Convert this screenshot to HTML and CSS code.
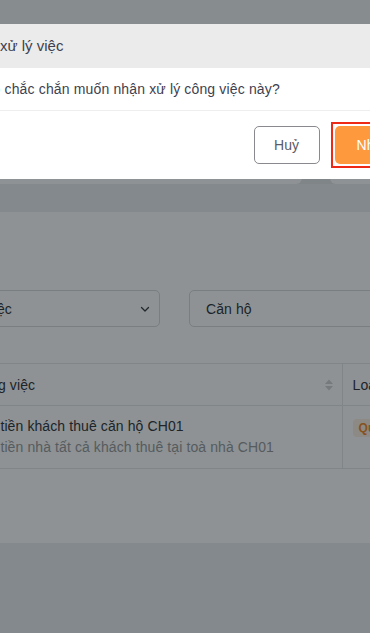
FILE: index.html
```html
<!DOCTYPE html>
<html lang="vi">
<head>
    <meta charset="UTF-8">
    <meta name="viewport" content="width=device-width, initial-scale=1.0">
    <title>Công việc</title>
    <link rel="stylesheet" href="styles.css">
</head>
<body>

    <!-- Page behind the dialog -->
    <div class="page">
        <div class="top-bar"></div>
        <div class="summary">
            <div class="summary-card"></div>
            <div class="summary-card"></div>
        </div>

        <div class="panel">
            <div class="filters">
                <div class="select-box">
                    <span>Loại công việc</span>
                    <svg class="chevron" width="12" height="12" viewBox="0 0 12 12"><path d="M2.5 4.5 6 8l3.5-3.5" fill="none" stroke="#3a3f46" stroke-width="1.3" stroke-linecap="round" stroke-linejoin="round"/></svg>
                </div>
                <div class="input-box">Căn hộ</div>
            </div>

            <table class="task-table">
                <colgroup>
                    <col class="w-no">
                    <col class="w-task">
                    <col class="w-type">
                </colgroup>
                <thead>
                    <tr>
                        <th class="col-no">STT</th>
                        <th class="col-task">
                            <div class="th-inner">
                                <span>Công việc</span>
                                <svg class="sort" width="10" height="12" viewBox="0 0 10 12"><path d="M5 0.5 9 5H1z" fill="#d3d3d3"/><path d="M5 11.5 1 7h8z" fill="#d3d3d3"/></svg>
                            </div>
                        </th>
                        <th class="col-type">Loại</th>
                    </tr>
                </thead>
                <tbody>
                    <tr>
                        <td class="col-no">1</td>
                        <td class="col-task">
                            <div class="task-title">Thu tiền khách thuê căn hộ CH01</div>
                            <div class="task-desc">Thu tiền nhà tất cả khách thuê tại toà nhà CH01</div>
                        </td>
                        <td class="col-type"><span class="tag">Quản lý</span></td>
                    </tr>
                </tbody>
            </table>
        </div>
    </div>

    <!-- Confirm dialog -->
    <div class="overlay"></div>
    <div class="modal">
        <div class="modal-header">Nhận xử lý việc</div>
        <div class="modal-body">Bạn có chắc chắn muốn nhận xử lý công việc này?</div>
        <div class="modal-footer">
            <button class="btn-cancel">Huỷ</button>
            <span class="focus-ring"><button class="btn-ok">Nhận</button></span>
        </div>
    </div>

</body>
</html>
```

FILE: styles.css
```css
body {
    font-family: "Liberation Sans", Arial, sans-serif;
    margin: 0;
    padding: 0;
    overflow: hidden;
    background-color: #eceef0;
    color: #333;
}

/* Page under the overlay */
.page {
    margin-left: -118px;
    width: 640px;
}

.top-bar {
    height: 24px;
    background-color: #f3f4f5;
}

.summary {
    height: 160px;
    background-color: #e5e7e8;
    display: flex;
    align-items: flex-end;
    gap: 28px;
    padding-left: 16px;
}

.summary-card {
    width: 404px;
    height: 120px;
    background-color: #fff;
    border-radius: 6px;
}

.summary-card + .summary-card {
    width: 180px;
}

.panel {
    margin-top: 28px;
    background-color: #fff;
    padding: 78px 16px 74px 16px;
}

.filters {
    display: flex;
    gap: 29px;
}

.select-box, .input-box {
    height: 37px;
    box-sizing: border-box;
    border: 1px solid #d9dadb;
    border-radius: 5px;
    font-size: 14px;
    letter-spacing: 0.1px;
    color: #33373d;
    display: flex;
    align-items: center;
    padding: 0 16px;
}

.select-box {
    width: 262px;
    justify-content: space-between;
    padding-left: 22px;
    padding-right: 8px;
}

.input-box {
    width: 300px;
}

.task-table {
    margin-top: 36px;
    border-collapse: collapse;
    table-layout: fixed;
    width: 600px;
    font-size: 14px;
    letter-spacing: 0.1px;
}

.w-no {
    width: 58px;
}

.w-task {
    width: 386px;
}

.task-table th {
    text-align: left;
    font-weight: normal;
    color: #33373d;
    height: 41px;
    padding: 0;
    border-top: 1px solid #e6e7e8;
    border-bottom: 1px solid #e6e7e8;
}

.task-table td {
    vertical-align: top;
    padding: 0;
    height: 62px;
    border-bottom: 1px solid #e6e7e8;
}

.col-no {
    padding-left: 10px !important;
}

.col-task {
    padding-left: 16px !important;
    padding-right: 8px !important;
    border-right: 1px solid #e6e7e8;
}

.th-inner {
    display: flex;
    justify-content: space-between;
    align-items: center;
}

.col-type {
    padding-left: 10px !important;
}

.task-title {
    margin-top: 12px;
    color: #33373d;
}

.task-desc {
    margin-top: 5px;
    color: #9a9ca0;
}

.tag {
    display: inline-block;
    margin-top: 13px;
    padding: 2px 6px;
    font-size: 12px;
    line-height: 14px;
    font-weight: bold;
    color: #f38a2a;
    background-color: #fdf0e3;
    border-radius: 4px;
}

/* Dim layer */
.overlay {
    position: fixed;
    inset: 0;
    background-color: rgba(4, 13, 17, 0.45);
}

/* Dialog */
.modal {
    position: absolute;
    top: 24px;
    left: -64px;
    width: 497px;
    background-color: #fff;
}

.modal-header {
    height: 44px;
    line-height: 44px;
    padding: 0 24px;
    background-color: #ebebeb;
    font-size: 15px;
    color: #3e3f4f;
}

.modal-body {
    height: 42px;
    line-height: 42px;
    padding: 0 20px;
    font-size: 14px;
    letter-spacing: 0.15px;
    color: #3e3f4f;
    border-bottom: 1px solid #eeeeee;
}

.modal-footer {
    display: flex;
    justify-content: flex-end;
    align-items: center;
    gap: 11px;
    height: 68px;
    padding-right: 17px;
}

.btn-cancel, .btn-ok {
    height: 38px;
    font-family: "Liberation Sans", Arial, sans-serif;
    font-size: 14px;
    border-radius: 5px;
    cursor: pointer;
}

.btn-cancel {
    width: 66px;
    background-color: #fff;
    color: #5b5b66;
    border: 1px solid #8a8a8e;
}

.focus-ring {
    display: block;
    border: 2px solid #ee2a17;
    padding: 2px;
}

.btn-ok {
    display: block;
    padding: 0 22px;
    background-color: #fe9a3d;
    color: #fff;
    border: none;
}
```
